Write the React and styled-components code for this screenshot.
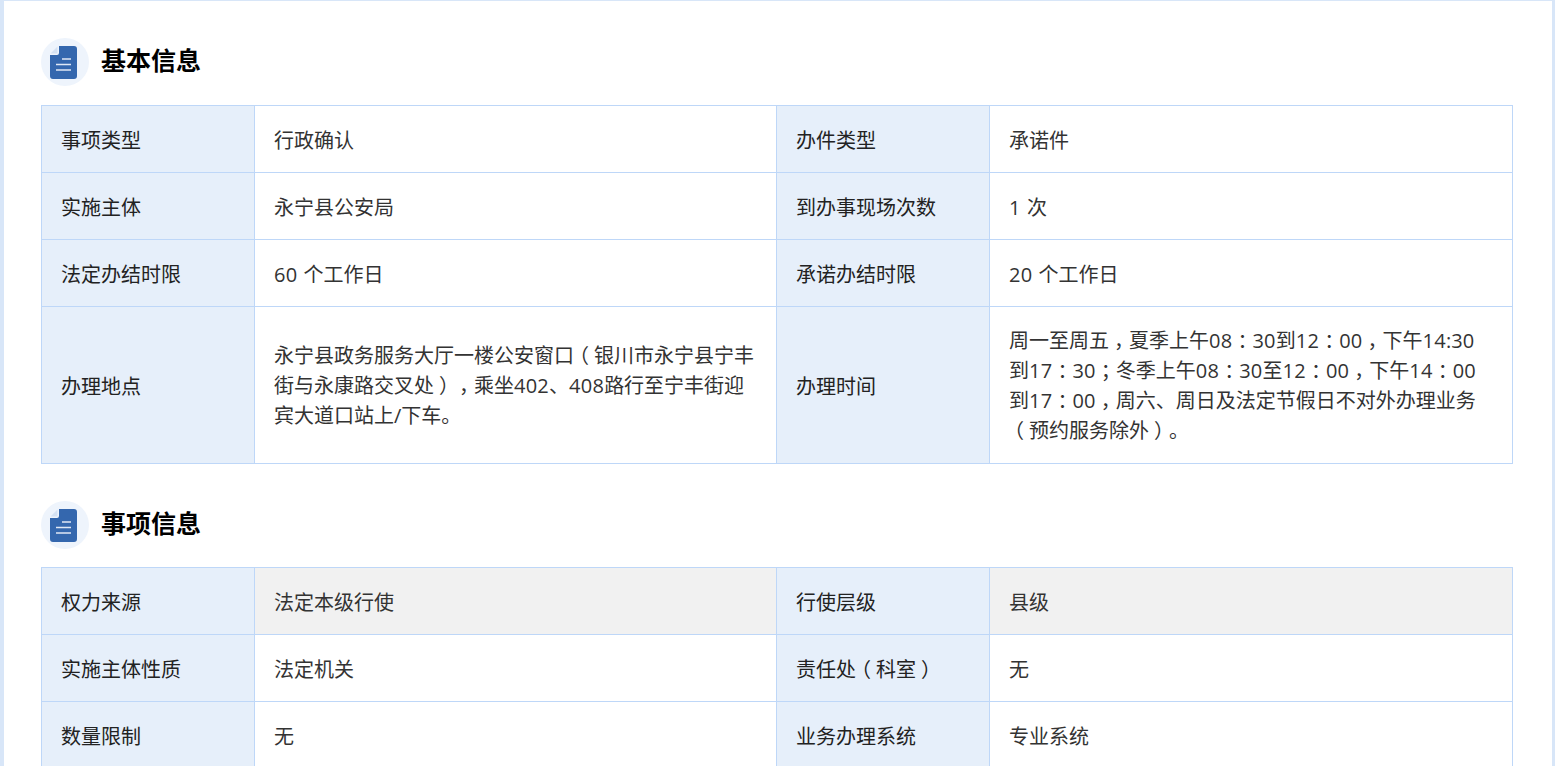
import React from 'react';
import styled, { createGlobalStyle } from 'styled-components';

const GlobalStyle = createGlobalStyle`
  html, body {
    margin: 0;
    height: 100%;
    overflow: hidden;
    background: #d8e6f8;
  }
  body {
    font-family: "Open Sans", "Noto Sans CJK SC", sans-serif;
    text-spacing-trim: space-all;
    font-synthesis: none;
  }
`;

const Page = styled.div`
  height: 766px;
  padding: 1px 3px 0 4px;
  box-sizing: border-box;
  overflow: hidden;
`;

const Panel = styled.main`
  background: #fff;
  padding: 37px 39px 0 37px;
  min-height: 100%;
  box-sizing: border-box;
`;

const SectionHeader = styled.div`
  display: flex;
  align-items: center;
  gap: 12px;
  height: 48px;
  margin-bottom: ${({ $gap }) => $gap}px;
`;

const IconCircle = styled.span`
  display: flex;
  align-items: center;
  justify-content: center;
  width: 48px;
  height: 48px;
  border-radius: 50%;
  background: #eef4fc;

  svg {
    margin-right: 3px;
  }
`;

const Title = styled.h2`
  margin: 0;
  padding-bottom: 6px;
  font-size: 25px;
  font-weight: 700;
  color: #000;
`;

const Table = styled.div`
  display: grid;
  grid-template-columns: 213px 522px 213px 523px;
  border-top: 1px solid #bed7f8;
  border-left: 1px solid #bed7f8;
  margin-bottom: 37px;
`;

const Cell = styled.div`
  display: flex;
  align-items: center;
  min-height: 67px;
  padding: 4px 19px 0;
  box-sizing: border-box;
  border-right: 1px solid #bed7f8;
  border-bottom: 1px solid #bed7f8;
  font-size: 20px;
  line-height: 30px;
  word-spacing: 1px;
`;

const Label = styled(Cell)`
  background: #e6effa;
  color: #222;
`;

const Value = styled(Cell)`
  background: ${({ $muted }) => ($muted ? '#f1f1f1' : '#fff')};
  color: #333;
  padding: ${({ $tall }) => ($tall ? '19px 22px 17px 19px' : '4px 19px 0')};
`;

const CellText = styled.span`
  display: block;
`;

// the reference font sets these marks in the middle of their em box:
// half-width forms with a quarter em on each side
const Punct = styled.span`
  font-feature-settings: "halt";
  padding: 0 0.25em;
`;

const Digits = styled.span`
  letter-spacing: 0.25px;
`;

const PunctText = ({ children }) => (
  <CellText>
    {children.split(/([，：；（）]|\d+)/).map((part, i) => {
      if (/^[，：；（）]$/.test(part)) return <Punct key={i}>{part}</Punct>;
      if (/^\d+$/.test(part)) return <Digits key={i}>{part}</Digits>;
      return part;
    })}
  </CellText>
);

const DocIcon = () => (
  <svg width="27" height="33" viewBox="0 0 27 33">
    <path
      d="M9 0H24a3 3 0 0 1 3 3V30a3 3 0 0 1-3 3H3a3 3 0 0 1-3-3V9H7a2 2 0 0 0 2-2Z"
      fill="#3467ae"
    />
    <path d="M7.500 0.500V7.500H0.500Z" fill="#d5e2f3" />
    <path d="M12 13H21M6 18.500H21M6 24H21" stroke="#dfe8f5" strokeWidth="1.500" />
  </svg>
);

const Section = ({ title, rows, gap }) => (
  <section>
    <SectionHeader $gap={gap}>
      <IconCircle>
        <DocIcon />
      </IconCircle>
      <Title>{title}</Title>
    </SectionHeader>
    <Table>
      {rows.map((row) => (
        <React.Fragment key={row.label}>
          <Label>
            <PunctText>{row.label}</PunctText>
          </Label>
          <Value $muted={row.muted} $tall={row.tall}>
            <PunctText>{row.value}</PunctText>
          </Value>
          <Label>
            <PunctText>{row.label2}</PunctText>
          </Label>
          <Value $muted={row.muted} $tall={row.tall}>
            <PunctText>{row.value2}</PunctText>
          </Value>
        </React.Fragment>
      ))}
    </Table>
  </section>
);

const basicRows = [
  { label: '事项类型', value: '行政确认', label2: '办件类型', value2: '承诺件' },
  { label: '实施主体', value: '永宁县公安局', label2: '到办事现场次数', value2: '1 次' },
  { label: '法定办结时限', value: '60 个工作日', label2: '承诺办结时限', value2: '20 个工作日' },
  {
    label: '办理地点',
    value: '永宁县政务服务大厅一楼公安窗口（银川市永宁县宁丰街与永康路交叉处），乘坐402、408路行至宁丰街迎宾大道口站上/下车。',
    label2: '办理时间',
    value2:
      '周一至周五，夏季上午08：30到12：00，下午14:30到17：30；冬季上午08：30至12：00，下午14：00到17：00，周六、周日及法定节假日不对外办理业务（预约服务除外）。',
    tall: true,
  },
];

const itemRows = [
  { label: '权力来源', value: '法定本级行使', label2: '行使层级', value2: '县级', muted: true },
  { label: '实施主体性质', value: '法定机关', label2: '责任处（科室）', value2: '无' },
  { label: '数量限制', value: '无', label2: '业务办理系统', value2: '专业系统' },
];

const App = () => (
  <Page>
    <GlobalStyle />
    <Panel>
      <Section title="基本信息" rows={basicRows} gap={19} />
      <Section title="事项信息" rows={itemRows} gap={18} />
    </Panel>
  </Page>
);

export default App;
